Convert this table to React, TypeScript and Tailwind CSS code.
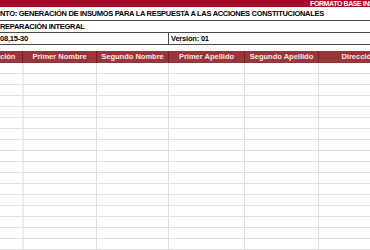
const columns = [
  { label: 'ción', width: 'w-[22px]', align: 'justify-start' },
  { label: 'Primer Nombre', width: 'w-[74px]', align: 'justify-center' },
  { label: 'Segundo Nombre', width: 'w-[72px]', align: 'justify-center' },
  { label: 'Primer Apellido', width: 'w-[76px]', align: 'justify-center' },
  { label: 'Segundo Apellido', width: 'w-[74px]', align: 'justify-center' },
  { label: 'Dirección', width: 'w-[80px]', align: 'justify-center' },
]

const rows = Array.from({ length: 18 }, (_, i) => i)

export default function App() {
  return (
    <div className="w-[370px] h-[250px] overflow-hidden bg-white text-black font-['Liberation_Sans',Arial,sans-serif]">
      {/* barra superior */}
      <div className="h-[7px] bg-[#a50d2b] flex justify-end items-end overflow-hidden">
        <span className="text-[7px] leading-[7px] tracking-[-0.4px] font-bold text-white whitespace-nowrap w-[60px]">
          FORMATO BASE INSUMOS
        </span>
      </div>

      {/* encabezado del formato */}
      <div className="h-[14px] border-b border-[#4a4a4a] flex items-center text-[7.5px] tracking-[-0.3px] font-bold whitespace-nowrap">
        NTO: GENERACIÓN DE INSUMOS PARA LA RESPUESTA A LAS ACCIONES CONSTITUCIONALES
      </div>
      <div className="h-[12px] border-b border-[#4a4a4a] flex items-center text-[7.5px] tracking-[-0.3px] font-bold whitespace-nowrap">
        REPARACIÓN INTEGRAL
      </div>
      <div className="h-[12px] border-b border-[#4a4a4a] flex text-[7.5px] tracking-[-0.2px] font-bold whitespace-nowrap">
        <div className="w-[168px] flex items-center">08,15-30</div>
        <div className="flex-1 border-l border-[#4a4a4a] flex items-center pl-[2px]">Versión: 01</div>
      </div>

      <div className="h-[6px]" />

      {/* tabla */}
      <div className="flex h-[12px] bg-[#983538] text-[7.5px] font-bold text-[#fbeaea] whitespace-nowrap">
        {columns.map((c, i) => (
          <div
            key={c.label}
            className={`${c.width} shrink-0 flex items-center overflow-hidden ${c.align} ${i > 0 ? 'border-l border-[#6e2023]' : ''}`}
          >
            {c.label}
          </div>
        ))}
      </div>
      {rows.map((r) => (
        <div key={r} className="flex h-[11px] border-b border-[#dedede]">
          {columns.map((c, i) => (
            <div
              key={c.label}
              className={`${c.width} shrink-0 ${i === 1 ? 'border-l-2 border-[#ececec]' : i > 1 ? 'border-l border-[#dedede]' : ''}`}
            />
          ))}
        </div>
      ))}
    </div>
  )
}
